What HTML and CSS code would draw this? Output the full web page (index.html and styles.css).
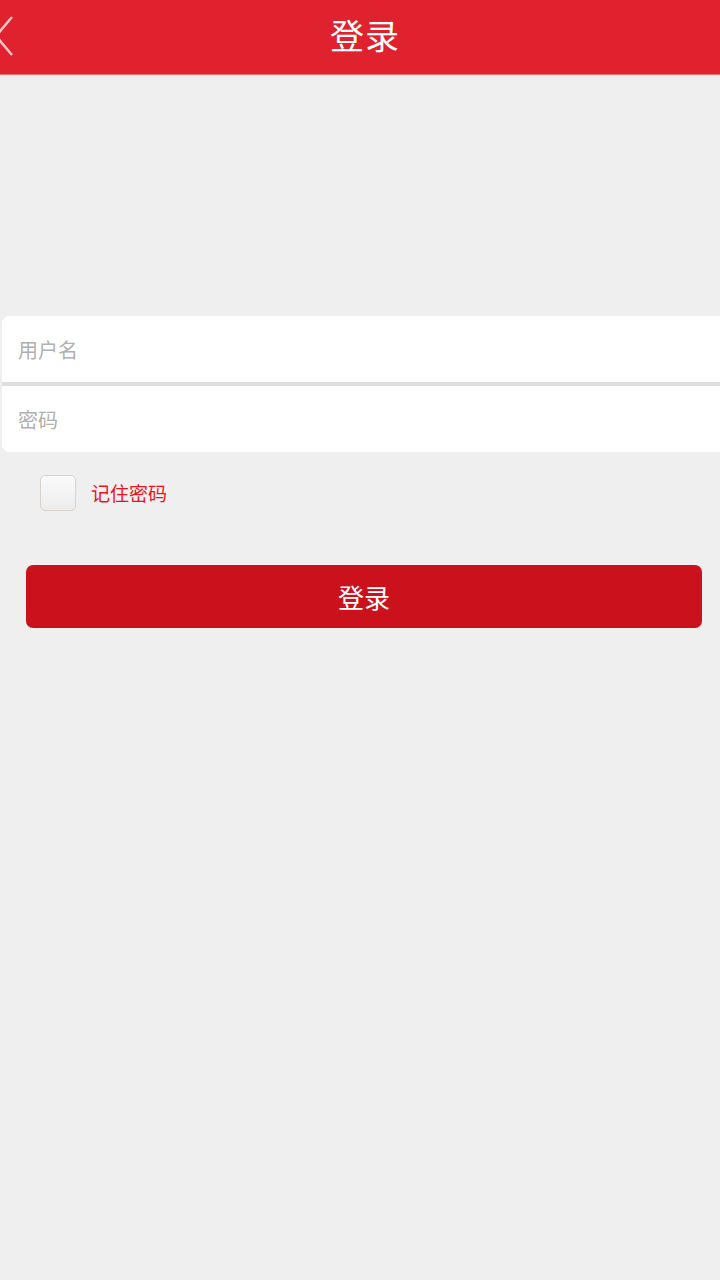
FILE: index.html
```html
<!DOCTYPE html>
<html lang="zh-CN">
<head>
    <meta charset="UTF-8">
    <title>登录</title>
    <link rel="stylesheet" href="styles.css">
</head>
<body>
    <div class="header">
        <a class="back" href="#">
            <svg width="16" height="42" viewBox="0 0 16 42">
                <polyline points="12,2 -4,21 12,40" fill="none" stroke="#f7c5c8" stroke-width="2.5"/>
            </svg>
        </a>
        <h1>登录</h1>
    </div>

    <form class="login">
        <div class="fields">
            <input type="text" name="username" placeholder="用户名">
            <input type="password" name="password" placeholder="密码">
        </div>

        <label class="remember">
            <input type="checkbox" name="remember">
            <span>记住密码</span>
        </label>

        <button type="submit">登录</button>
    </form>
</body>
</html>
```

FILE: styles.css
```css
body {
    margin: 0;
    background: #efefef;
    font-family: "Noto Sans CJK SC", "Noto Sans", sans-serif;
}

.header {
    height: 74px;
    background: #e0212e;
    border-bottom: 1px solid #ea6a72;
    display: flex;
    align-items: center;
    justify-content: center;
    position: relative;
}

.header h1 {
    margin: 0 0 6px 10px;
    color: #fff;
    font-size: 34px;
    font-weight: normal;
    letter-spacing: 1px;
}

.back {
    position: absolute;
    left: 0;
    top: 15px;
    display: block;
}

.login {
    padding-top: 241px;
}

.fields {
    margin-left: 2px;
    margin-right: -10px;
    background: #fff;
    border-radius: 8px;
    overflow: hidden;
}

.fields input {
    display: block;
    width: 100%;
    height: 66px;
    border: none;
    padding: 0 16px;
    box-sizing: border-box;
    font-family: inherit;
    font-size: 20px;
    color: #333;
    background: #fff;
    outline: none;
}

.fields input::placeholder {
    color: #b0b0b0;
}

.fields input + input {
    border-top: 4px solid #dedede;
    height: 70px;
}

.remember {
    display: flex;
    align-items: center;
    margin: 23px 0 0 40px;
    color: #e8141e;
    font-size: 19px;
}

.remember input {
    appearance: none;
    width: 36px;
    height: 36px;
    margin: 0 15px 0 0;
    border: 1px solid #d9d2cc;
    border-radius: 5px;
    background: linear-gradient(#fafafa, #ececec);
    box-sizing: border-box;
}

.remember span {
    line-height: 36px;
}

button {
    display: block;
    margin: 54px 18px 0 26px;
    width: 676px;
    height: 63px;
    border: none;
    border-radius: 7px;
    background: #cb111b;
    color: #fff;
    font-family: inherit;
    font-size: 26px;
}
```
